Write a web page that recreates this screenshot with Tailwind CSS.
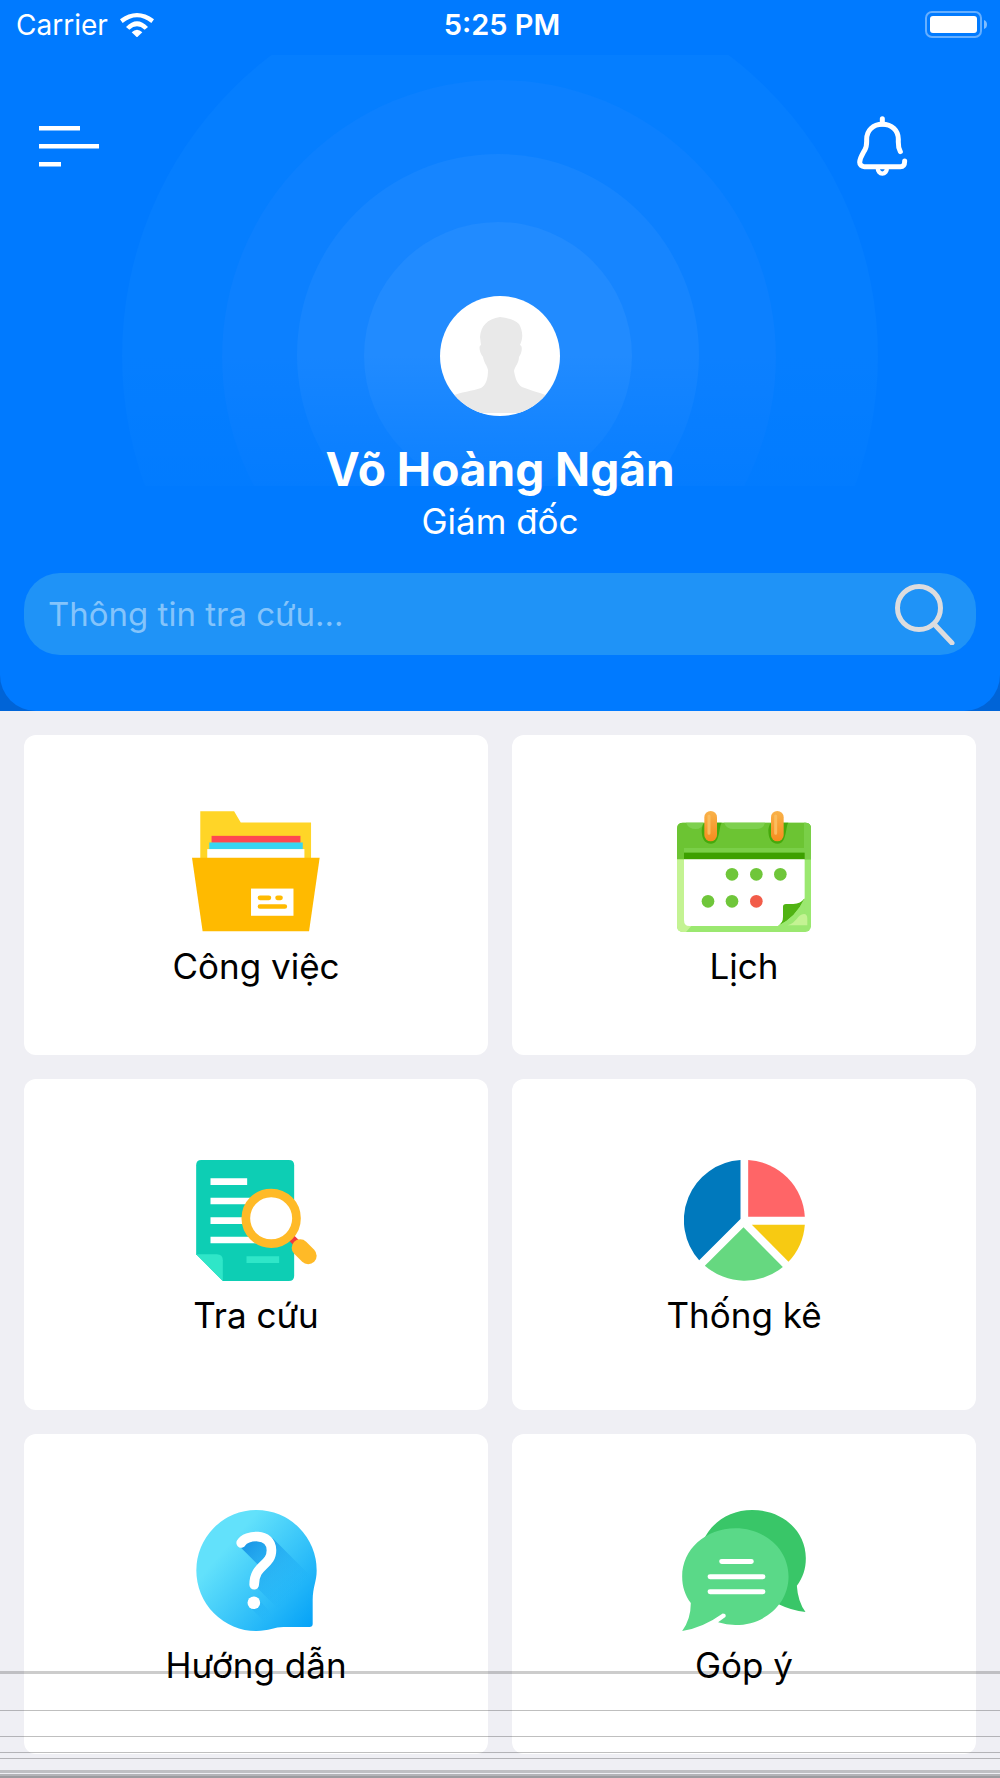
<!DOCTYPE html>
<html lang="vi">
<head>
    <meta charset="UTF-8" />
    <meta name="viewport" content="width=device-width, initial-scale=1.0" />
    <title>Trang chủ</title>
    <script src="https://cdn.jsdelivr.net/npm/@tailwindcss/browser@4"></script>
</head>
<body class="relative min-h-screen bg-[#efeff4] font-['Inter','Noto_Sans',sans-serif] text-black">
    <div class="bg-[#0064d7]">
        <header class="relative overflow-hidden rounded-b-[36px] bg-[#007aff] pb-14 text-white">
            <!-- Vòng tròn nền -->
            <svg class="absolute top-[55px] left-1/2 h-[431px] w-[756px] -translate-x-1/2" viewBox="0 0 756 431" aria-hidden="true">
                <defs>
                    <linearGradient id="fade" x1="0" y1="0" x2="0" y2="1">
                        <stop offset="0" stop-color="#007aff" stop-opacity="0" />
                        <stop offset="1" stop-color="#007aff" stop-opacity=".65" />
                    </linearGradient>
                </defs>
                <circle cx="378" cy="301" r="378" fill="#057eff" />
                <circle cx="377" cy="302" r="277" fill="#0c80ff" />
                <circle cx="376" cy="300" r="201" fill="#1685ff" />
                <circle cx="376" cy="301" r="134" fill="#218bff" />
                <rect y="300" width="756" height="131" fill="url(#fade)" />
            </svg>

            <!-- Thanh trạng thái -->
            <div class="relative grid h-[50px] grid-cols-3 items-center px-4 text-[28px] leading-8">
                <div class="flex items-center gap-3">
                    <span>Carrier</span>
                    <svg class="h-6 w-[34px]" viewBox="0 0 102 72" fill="#fff" aria-hidden="true">
                        <path d="M0 19 Q51 -19 102 19 L94 30 Q51 -4 8 30 Z" />
                        <path d="M18 42 Q51 8 84 42 L74 50 Q51 30 28 50 Z" />
                        <path d="M35 58 Q51 42 67 58 L51 73 Z" />
                    </svg>
                </div>
                <span class="pl-1 text-center text-[29px] font-semibold">5:25 PM</span>
                <svg class="-mr-1 h-7 w-16 justify-self-end" viewBox="0 0 64 28" aria-hidden="true">
                    <rect x="2" y="1" width="55" height="25" rx="6" fill="none" stroke="#fff" stroke-opacity=".4" stroke-width="2" />
                    <rect x="6" y="5" width="47" height="17" rx="3" fill="#fff" />
                    <path d="M60 9 Q63 10 63 13.500 Q63 17 60 18 Z" fill="#fff" fill-opacity=".5" />
                </svg>
            </div>

            <!-- Menu và thông báo -->
            <div class="relative mt-[66px] flex items-center justify-between pr-[92px] pl-[38px]">
                <button type="button" aria-label="Menu" class="block">
                    <svg class="h-[60px] w-[62px]" viewBox="0 0 62 60" fill="#fff">
                        <rect x="1" y="10" width="41" height="4.500" />
                        <rect x="1" y="28" width="60" height="4.500" />
                        <rect x="1" y="46" width="22" height="4.500" />
                    </svg>
                </button>
                <button type="button" aria-label="Thông báo" class="block">
                    <svg class="h-[60px] w-[51px]" viewBox="1071 348 153 180" fill="none" stroke="#fff" stroke-width="15" stroke-linecap="round" stroke-linejoin="round">
                        <path d="M1147 356 V372" />
                        <path d="M1201 455 C1193 440 1195 434 1195 418 C1195 391 1175 373 1147 373 C1119 373 1100 391 1100 418 C1100 434 1101 440 1094 451 C1085 467 1080 473 1079 487 C1079 495 1085 500 1093 500 H1201 C1210 500 1214 495 1214 483" />
                        <path d="M1133 502 C1133 527 1161 527 1161 502" stroke-width="13" />
                    </svg>
                </button>
            </div>

            <div class="relative mt-[120px] flex flex-col items-center">
                <svg class="size-[120px] rounded-full bg-white" viewBox="0 0 120 120" aria-hidden="true">
                    <path d="M60 21 C47 23 41 30 40 41 L41 49 C38 50 40 58 43 61 C44 67 47 69 48 74 C48 83 46 89 41 92 C33 95 20 96 12 100 V117 H108 V100 C98 96 89 94 82 91 C77 88 75 81 74 75 C75 70 79 67 79 61 C82 57 83 50 80 49 C84 41 82 33 79 28 C74 23 67 22 60 21 Z" fill="#e9e9e9" />
                </svg>
                <h1 class="mt-[25px] text-[46px] leading-[56px] font-bold">Võ Hoàng Ngân</h1>
                <p class="mt-1 text-[35px] leading-10">Giám đốc</p>
            </div>

            <form class="relative mx-6 mt-8 flex h-[82px] items-center rounded-[36px] bg-[#1f93f7] px-6" onsubmit="return false">
                <input id="search" type="text" aria-label="Thông tin tra cứu" placeholder="Thông tin tra cứu..." class="min-w-0 flex-1 bg-transparent text-[33px] leading-10 text-white outline-none placeholder:text-[#84c4fb]" />
                <button type="submit" aria-label="Tìm kiếm" class="-mr-1 block">
                    <svg class="size-[62px]" viewBox="0 0 62 62" fill="none" stroke="#dcdcde" stroke-width="5" stroke-linecap="round">
                        <circle cx="25" cy="25" r="21.500" />
                        <path d="M41 42 L58 60" />
                    </svg>
                </button>
            </form>
        </header>
    </div>

    <!-- Danh sách chức năng -->
    <main class="grid grid-cols-2 gap-6 p-6 text-[35px] leading-9">
        <a href="#" class="flex flex-col items-center gap-4 rounded-xl bg-white pt-[76px] pb-[71px]">
            <svg class="h-[121px] w-32" viewBox="96 63 386 363" aria-hidden="true">
                <path d="M121 63 H223 L243 97 H455 V210 H121 Z" fill="#ffd527" />
                <rect x="155" y="137" width="268" height="21" fill="#ff4850" />
                <rect x="148" y="157" width="282" height="21" fill="#38d6f2" />
                <rect x="142" y="177" width="293" height="30" fill="#fff" />
                <path d="M96 203 H481 L449 425 H128 Z" fill="#ffba00" />
                <rect x="274" y="296" width="128" height="82" fill="#fff" />
                <path d="M301 324 H328 M354 324 H363 M301 350 H376" stroke="#ffba00" stroke-width="14" stroke-linecap="round" />
            </svg>
            <span>Công việc</span>
        </a>
        <a href="#" class="flex flex-col items-center gap-4 rounded-xl bg-white pt-[76px] pb-[71px]">
            <svg class="h-[121px] w-[134px]" viewBox="81 63 402 363" aria-hidden="true">
                <defs>
                    <linearGradient id="ring" x1="0" y1="0" x2="0" y2="1">
                        <stop offset="0" stop-color="#f9b24a" />
                        <stop offset="1" stop-color="#f78c1e" />
                    </linearGradient>
                </defs>
                <rect x="81" y="98" width="402" height="328" rx="17" fill="#9be870" />
                <path d="M81 200 H102 V380 Q102 408 124 408 L108 426 H98 Q81 426 81 409 Z" fill="#c4f393" />
                <path d="M81 208 V115 Q81 98 98 98 H466 Q483 98 483 115 V208 Z" fill="#6cc433" />
                <path d="M462 98 H466 Q483 98 483 115 V208 H462 Z M102 174 H462 V188 H102 Z" fill="#7acf48" />
                <path d="M108 98 H160 Q156 117 137 117 Q116 117 108 98 Z M222 98 H345 Q340 117 320 117 H250 Q230 117 222 98 Z" fill="#7ed04f" />
                <rect x="102" y="188" width="362" height="21" fill="#3da000" />
                <path d="M102 208 H464 V325 L384 408 H118 Q102 408 102 390 Z" fill="#fff" />
                <path d="M464 325 Q438 382 384 408 Q399 400 399 380 V350 Q399 342 408 342 H430 Q452 342 464 325 Z" fill="#50b313" />
                <path d="M464 325 Q438 382 384 408 H464 Z" fill="#9be870" />
                <path d="M412 406 C440 400 442 372 462 372 Q472 372 472 386 V406 Z" fill="#c4f393" />
                <path d="M155 120 Q158 98 166 98 H215 C206 110 211 161 183 161 Q155 161 155 120 Z M355 120 Q358 98 366 98 H415 C406 110 411 161 383 161 Q355 161 355 120 Z" fill="#46a90c" />
                <rect x="163" y="63" width="38" height="91" rx="19" fill="url(#ring)" />
                <rect x="363" y="63" width="38" height="91" rx="19" fill="url(#ring)" />
                <path d="M177 78 V130 M377 78 V130" stroke="#fbbd5e" stroke-width="9" stroke-linecap="round" />
                <g fill="#6fc63a">
                    <circle cx="246" cy="253" r="19" />
                    <circle cx="319" cy="253" r="19" />
                    <circle cx="391" cy="253" r="19" />
                    <circle cx="174" cy="334" r="19" />
                    <circle cx="246" cy="334" r="19" />
                </g>
                <circle cx="319" cy="334" r="19" fill="#f25c49" />
            </svg>
            <span>Lịch</span>
        </a>
        <a href="#" class="flex flex-col items-center gap-4 rounded-xl bg-white pt-[81px] pb-[77px]">
            <svg class="size-[121px]" viewBox="108 60 362 363" aria-hidden="true">
                <path d="M123 60 H386 Q402 60 402 76 V407 Q402 423 386 423 H188 L108 343 V76 Q108 60 123 60 Z" fill="#0dceb4" />
                <path d="M108 343 H170 Q188 343 188 361 V423 Z" fill="#2fe6c8" />
                <path d="M151 125 H261 M151 183 H270 M151 242 H260 M151 300 H290" stroke="#fff" stroke-width="20" />
                <path d="M259 359 H357" stroke="#2fe6c8" stroke-width="20" />
                <path d="M388 288 L408 308" stroke="#f0393f" stroke-width="22" />
                <circle cx="333" cy="235" r="76" fill="#fff" stroke="#ffba27" stroke-width="26" />
                <path d="M420 323 L444 347" stroke="#ffba27" stroke-width="51" stroke-linecap="round" />
            </svg>
            <span>Tra cứu</span>
        </a>
        <a href="#" class="flex flex-col items-center gap-4 rounded-xl bg-white pt-[81px] pb-[77px]">
            <svg class="size-[121px]" viewBox="101 60 362 363" aria-hidden="true">
                <path d="M270 60 V237 L146 361 A181 181 0 0 1 270 60 Z" fill="#0079bd" />
                <path d="M293 60 A181 181 0 0 1 463 230 H293 Z" fill="#ff6567" />
                <path d="M304 254 H463 A181 181 0 0 1 414 365 Z" fill="#f7ca12" />
                <path d="M279 262 L397 381 A181 181 0 0 1 163 377 Z" fill="#66d880" />
            </svg>
            <span>Thống kê</span>
        </a>
        <a href="#" class="flex flex-col items-center gap-4 rounded-xl bg-white pt-[76px] pb-[71px]">
            <svg class="size-[121px]" viewBox="108 59 362 364" aria-hidden="true">
                <defs>
                    <linearGradient id="bubble" x1="190" y1="180" x2="455" y2="410" gradientUnits="userSpaceOnUse">
                        <stop offset="0" stop-color="#62e1fb" />
                        <stop offset="1" stop-color="#05a2f7" />
                    </linearGradient>
                    <linearGradient id="shade" x1="260" y1="170" x2="400" y2="310" gradientUnits="userSpaceOnUse">
                        <stop offset="0" stop-color="#1593e6" stop-opacity=".9" />
                        <stop offset="1" stop-color="#12a5f5" stop-opacity="0" />
                    </linearGradient>
                </defs>
                <path d="M289 59 A181 182 0 0 1 470 241 C470 275 458 290 458 330 V402 Q458 411 448 411 H370 C345 411 325 423 289 423 A181 182 0 0 1 289 59 Z" fill="url(#bubble)" />
                <path d="M240 170 L292 222 L290 292 L352 354 L458 354 V290 Q466 270 464 270 L338 144 L270 140 Z M270 352 L330 412 L350 390 L294 326 Z" fill="url(#shade)" />
                <path d="M243 158 C256 134 334 124 334 180 C334 228 282 222 282 284" fill="none" stroke="#fff" stroke-width="29" stroke-linecap="round" />
                <circle cx="281" cy="338" r="19" fill="#fff" />
            </svg>
            <span>Hướng dẫn</span>
        </a>
        <a href="#" class="flex flex-col items-center gap-4 rounded-xl bg-white pt-[76px] pb-[71px]">
            <svg class="h-[121px] w-[124px]" viewBox="96 59 372 364" aria-hidden="true">
                <path d="M307 59 C398 59 468 122 468 204 C468 237 459 262 441 287 Q444 335 467 366 Q425 361 388 343 L160 150 C185 95 240 59 307 59 Z" fill="#39c668" />
                <path d="M256 114 C346 114 416 178 416 259 C416 341 346 405 256 405 Q229 405 204 397 L226 381 Q230 370 218 370 Q160 412 96 423 Q122 388 122 339 C105 316 96 290 96 259 C96 178 166 114 256 114 Z" fill="#5ad988" />
                <path d="M215 214 H304 M180 260 H339 M180 305 H339" stroke="#fff" stroke-width="15" stroke-linecap="round" />
            </svg>
            <span>Góp ý</span>
        </a>
    </main>

    <!-- Các đường kẻ ở cuối trang -->
    <div class="pointer-events-none absolute inset-x-0 bottom-0" aria-hidden="true">
        <div class="h-[3px] bg-black/20"></div>
        <div class="mt-9 h-px bg-black/25"></div>
        <div class="mt-[25px] h-px bg-black/25"></div>
        <div class="mt-[15px] h-px bg-black/25"></div>
        <div class="mt-[5px] h-px bg-black/25"></div>
        <div class="mt-[11px] h-[3px] bg-black/20"></div>
        <div class="mt-px h-0.5 bg-black/25"></div>
        <div class="h-0.5 bg-black/35"></div>
    </div>
</body>
</html>
